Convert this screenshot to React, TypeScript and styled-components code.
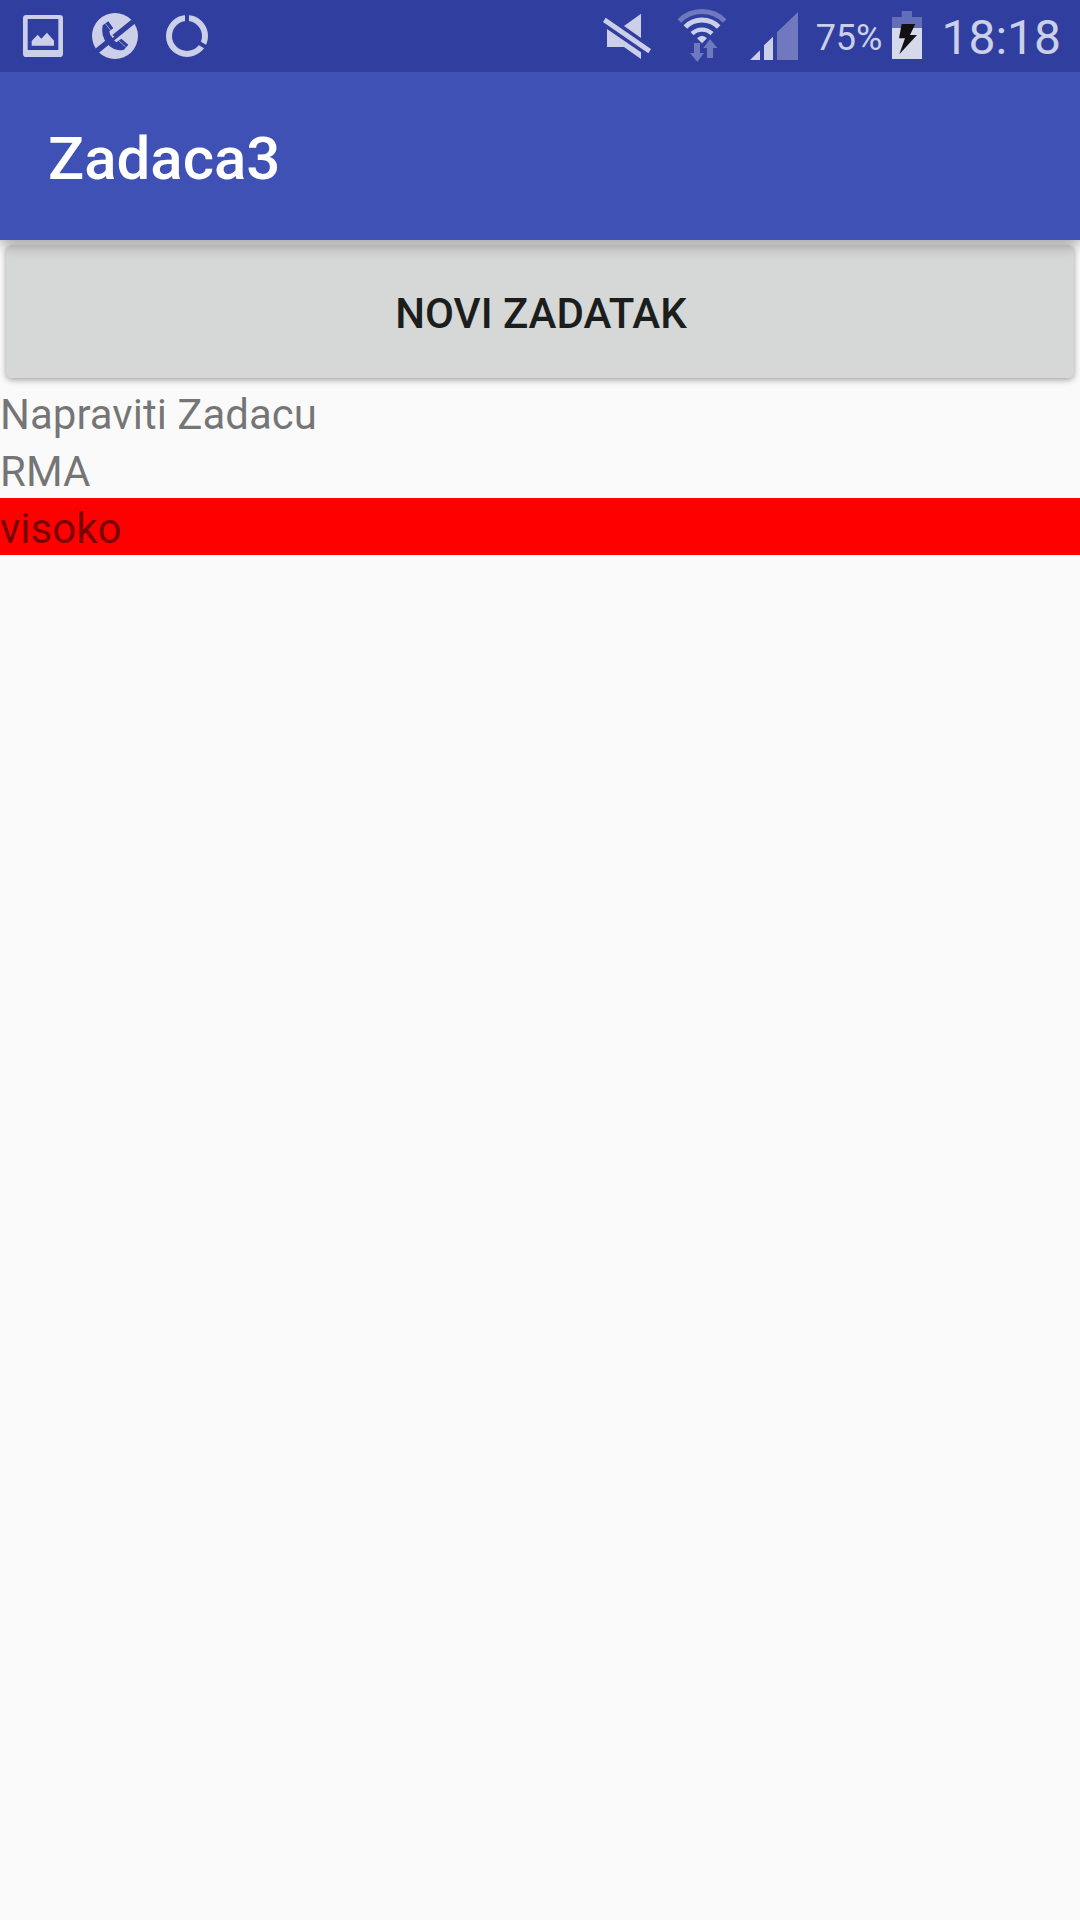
import React from "react";
import styled, { createGlobalStyle } from "styled-components";

const GlobalStyle = createGlobalStyle`
  *, *::before, *::after { box-sizing: border-box; }
  body {
    margin: 0;
    background: #fafafa;
    font-family: Roboto, "Noto Sans", sans-serif;
  }
`;

const Screen = styled.div`
  display: flex;
  flex-direction: column;
  min-height: 100vh;
  background: #fafafa;
`;

const StatusBar = styled.div`
  position: relative;
  z-index: 2;
  display: flex;
  justify-content: space-between;
  height: 72px;
  padding: 0 19px 0 7px;
  background: #303f9f;
  color: #cbcfe7;
`;

const StatusGroup = styled.div`
  display: flex;
  align-items: center;
`;

const Icon = styled.svg<{ $width: number }>`
  display: block;
  flex: none;
  width: ${(p) => p.$width}px;
  height: 72px;
  fill: #cbcfe7;
`;

const Percent = styled.span`
  padding: 4px 6px 0 16px;
  font-size: 36px;
  line-height: 42px;
`;

const Clock = styled.time`
  padding: 4px 0 0 15px;
  font-size: 48px;
  line-height: 56px;
`;

const AppBar = styled.header`
  position: relative;
  z-index: 1;
  display: flex;
  align-items: center;
  height: 168px;
  padding: 6px 48px 0;
  background: #3f51b5;
  box-shadow: 0 4px 14px rgba(0, 0, 0, 0.38);
`;

const Title = styled.h1`
  margin: 0;
  color: #fff;
  font-size: 60px;
  font-weight: 500;
  line-height: 72px;
`;

const Content = styled.main`
  display: flex;
  flex-direction: column;
`;

const NewTaskButton = styled.button`
  height: 133px;
  margin: 5px 6px 6px;
  padding: 5px 0 0 2px;
  border: 0;
  border-radius: 6px;
  background: #d6d8d7;
  box-shadow: 0 2px 6px rgba(0, 0, 0, 0.36);
  color: #1c1d1d;
  font-family: inherit;
  font-size: 42px;
  font-weight: 500;
  line-height: 56px;
  text-transform: uppercase;
`;

const TaskList = styled.ul`
  margin: 0;
  padding: 0;
  list-style: none;
`;

const Field = styled.div<{ $background?: string }>`
  height: 57px;
  background: ${(p) => p.$background ?? "transparent"};
  color: rgba(0, 0, 0, 0.54);
  font-size: 42px;
  line-height: 62px;
`;

const PictureIcon = () => (
  <Icon $width={72} viewBox="21 0 216 216" aria-hidden="true">
    <path
      fillRule="evenodd"
      d="M79 45H179Q189 45 189 55V161Q189 171 179 171H79Q69 171 69 161V55Q69 45 79 45ZM83 57V150H175V57Z"
    />
    <path d="M95 137V123L113 104L124 116L141 98L162 122V137Z" />
  </Icon>
);

const CallBlockedIcon = () => (
  <Icon $width={72} viewBox="237 0 216 216" aria-hidden="true">
    <circle cx="345" cy="108" r="69" />
    <g fill="#303f9f">
      <path d="M282 149L396 58L408 68L296 159Z" />
      <path d="M308 76L325 64L340 85L328 94Q330 112 349 127L364 116L385 134L372 149Q345 156 323 133Q301 108 308 76Z" />
    </g>
    <path d="M331 100L343 110L338 114Q333 108 331 100Z" />
    <path d="M315 70L332 91M357 123L377 141" stroke="#cbcfe7" strokeWidth="2" />
  </Icon>
);

const DataUsageIcon = () => (
  <Icon $width={72} viewBox="453 0 216 216" aria-hidden="true">
    <circle cx="561" cy="108" r="54" fill="none" stroke="#cbcfe7" strokeWidth="18" />
    <path d="M561 40V70M597 129L622 143" stroke="#303f9f" strokeWidth="12" />
  </Icon>
);

const MuteIcon = () => (
  <Icon $width={64} viewBox="18 0 192 216" aria-hidden="true">
    <path d="M153 41V114L102 78Z" />
    <path d="M51 87L153 157V177L102 141H51Z" />
    <path d="M47 53L183 147L175 160L39 66Z" />
  </Icon>
);

const WifiIcon = () => (
  <Icon $width={74} viewBox="210 0 222 216" aria-hidden="true">
    <g fill="none" stroke="#cbcfe7">
      <path d="M268 63A96 96 0 0 1 404 63" stroke="#7079bd" strokeWidth="15" />
      <path d="M286 81A70 70 0 0 1 386 81" strokeWidth="15" />
      <path d="M306 101A43 43 0 0 1 366 101" strokeWidth="13" />
    </g>
    <path d="M321 115Q336 100 351 115L336 130Z" />
    <path
      fill="#7079bd"
      d="M312 129H330V159H342L322 186L300 159H312ZM360 117L382 144H369V174H351V144H340Z"
    />
  </Icon>
);

const SignalIcon = () => (
  <Icon $width={66} viewBox="432 0 198 216" aria-hidden="true">
    <path d="M480 180L510 151V180ZM522 180V136L549 110V180Z" />
    <path fill="#7079bd" d="M561 180V97L624 36V180Z" />
  </Icon>
);

const BatteryIcon = () => (
  <Icon $width={38} viewBox="264 0 114 216" aria-hidden="true">
    <path fill="#636eb8" d="M305 33H336V51H366V84H276V51H305Z" />
    <path fill="#d6d9ec" d="M276 84H366V177H276Z" />
    <path fill="#111" d="M305 72H346L330 105H351L298 163L315 115H297Z" />
  </Icon>
);

const tasks = [{ name: "Napraviti Zadacu", subject: "RMA", priority: "visoko" }];

const priorityColors: Record<string, string> = { visoko: "#ff0000" };

export default function App() {
  return (
    <Screen>
      <GlobalStyle />
      <StatusBar>
        <StatusGroup>
          <PictureIcon />
          <CallBlockedIcon />
          <DataUsageIcon />
        </StatusGroup>
        <StatusGroup>
          <MuteIcon />
          <WifiIcon />
          <SignalIcon />
          <Percent>75%</Percent>
          <BatteryIcon />
          <Clock>18:18</Clock>
        </StatusGroup>
      </StatusBar>
      <AppBar>
        <Title>Zadaca3</Title>
      </AppBar>
      <Content>
        <NewTaskButton type="button">Novi zadatak</NewTaskButton>
        <TaskList>
          {tasks.map((task) => (
            <li key={task.name}>
              <Field>{task.name}</Field>
              <Field>{task.subject}</Field>
              <Field $background={priorityColors[task.priority]}>{task.priority}</Field>
            </li>
          ))}
        </TaskList>
      </Content>
    </Screen>
  );
}
